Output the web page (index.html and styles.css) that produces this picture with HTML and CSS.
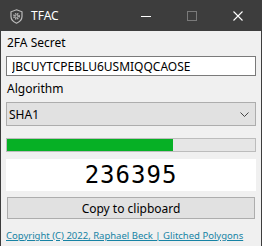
FILE: index.html
```html
<!DOCTYPE html>
<html lang="en">

<head>
    <meta charset="UTF-8">
    <meta name="viewport" content="width=device-width, initial-scale=1.0">
    <title>TFAC</title>
    <link rel="stylesheet" href="styles.css">
</head>

<body>

    <div class="window">
        <div class="titlebar">
            <svg class="app-icon" width="13" height="15" viewBox="0 0 13 15">
                <path d="M6.5 0.8 L12 2.8 V7.5 C12 10.6 9.7 12.8 6.5 14.2 C3.3 12.8 1 10.6 1 7.5 V2.8 Z" fill="none" stroke="#bdbdbd" stroke-width="1.2" />
                <circle cx="6.5" cy="7.3" r="2.6" fill="none" stroke="#bdbdbd" stroke-width="1.6" stroke-dasharray="1.2 0.9" />
                <circle cx="6.5" cy="7.3" r="1.4" fill="none" stroke="#bdbdbd" stroke-width="0.9" />
            </svg>
            <span class="title">TFAC</span>
            <div class="controls">
                <div class="ctrl">
                    <svg width="10" height="10" viewBox="0 0 10 10">
                        <line x1="0" y1="5.5" x2="10" y2="5.5" stroke="#ffffff" stroke-width="1" />
                    </svg>
                </div>
                <div class="ctrl">
                    <svg width="10" height="10" viewBox="0 0 10 10">
                        <rect x="0.5" y="0.5" width="9" height="9" fill="none" stroke="#7a7a7a" stroke-width="1" />
                    </svg>
                </div>
                <div class="ctrl">
                    <svg width="10" height="10" viewBox="0 0 10 10">
                        <path d="M0.5 0.5 L9.5 9.5 M9.5 0.5 L0.5 9.5" stroke="#ffffff" stroke-width="1.1" />
                    </svg>
                </div>
            </div>
        </div>

        <div class="content">
            <label class="field-label">2FA Secret</label>
            <input class="secret" type="text" value="JBCUYTCPEBLU6USMIQQCAOSE">

            <label class="field-label algo-label">Algorithm</label>
            <div class="select-wrap">
                <select class="algo">
                    <option>SHA1</option>
                    <option>SHA256</option>
                    <option>SHA512</option>
                </select>
                <svg class="chevron" width="9" height="5" viewBox="0 0 9 5">
                    <path d="M0.5 0.5 L4.5 4.5 L8.5 0.5" fill="none" stroke="#444" stroke-width="1" />
                </svg>
            </div>

            <div class="progress">
                <div class="progress-fill" style="width: 67%;"></div>
            </div>

            <div class="code">236395</div>

            <button class="copy-btn">Copy to clipboard</button>

            <a class="credits" href="#">Copyright (C) 2022, Raphael Beck | Glitched Polygons</a>
        </div>
    </div>

</body>

</html>
```

FILE: styles.css
```css
body {
    margin: 0;
    padding: 0;
    font-family: 'Noto Sans', 'Open Sans', sans-serif;
    font-size: 12px;
    background-color: #f0f0f0;
}

.window {
    width: 262px;
    height: 246px;
    box-sizing: border-box;
    border-left: 1px solid #3d3d3d;
    border-right: 1px solid #3d3d3d;
    background-color: #f0f0f0;
    overflow: hidden;
}

.titlebar {
    height: 31px;
    background-color: #3d3d3d;
    display: flex;
    align-items: center;
}

.app-icon {
    margin-left: 9px;
    margin-top: 1px;
}

.title {
    color: white;
    margin-left: 8px;
    font-size: 12px;
}

.controls {
    margin-left: auto;
    display: flex;
    height: 100%;
}

.ctrl {
    width: 46px;
    height: 31px;
    display: flex;
    align-items: center;
    justify-content: center;
}

.content {
    padding: 4px 5px 0 5px;
    display: flex;
    flex-direction: column;
}

.field-label {
    color: #000;
    line-height: 16px;
    height: 16px;
    margin-left: 1px;
}

.secret {
    margin-top: 5px;
    height: 20px;
    box-sizing: border-box;
    border: 1px solid #7a7a7a;
    background: white;
    padding: 0 5px;
    font-family: inherit;
    font-size: 12px;
    color: #000;
    outline: none;
}

.algo-label {
    margin-top: 5px;
}

.select-wrap {
    position: relative;
    margin-top: 5px;
}

.algo {
    appearance: none;
    width: 100%;
    height: 24px;
    box-sizing: border-box;
    border: 1px solid #adadad;
    background-color: #e1e1e1;
    padding: 0 2px;
    font-family: inherit;
    font-size: 12px;
    color: #000;
    border-radius: 0;
    outline: none;
}

.chevron {
    position: absolute;
    right: 7px;
    top: 10px;
}

.progress {
    margin-top: 12px;
    height: 14px;
    box-sizing: border-box;
    border: 1px solid #bcbcbc;
    background-color: #e6e6e6;
}

.progress-fill {
    height: 100%;
    background-color: #06b025;
}

.code {
    margin-top: 7px;
    height: 32px;
    background: white;
    text-align: center;
    font-family: 'DejaVu Sans Mono', monospace;
    font-size: 24px;
    letter-spacing: 1px;
    line-height: 32px;
    color: #000;
}

.copy-btn {
    margin: 6px 1px 0 1px;
    height: 22px;
    border: 1px solid #adadad;
    background-color: #e1e1e1;
    font-family: inherit;
    font-size: 12px;
    color: #000;
    padding: 0;
    border-radius: 0;
}

.credits {
    margin-top: 9px;
    color: #1683a4;
    font-size: 9.5px;
    line-height: 15px;
    white-space: nowrap;
}
```
